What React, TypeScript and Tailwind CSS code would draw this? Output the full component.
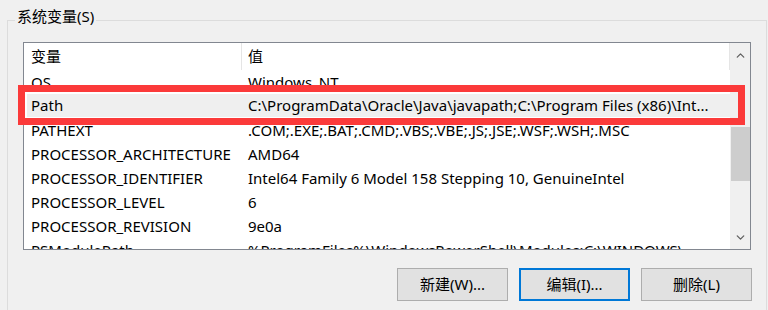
import { ChevronUp, ChevronDown } from "lucide-react";

const rows = [
  { name: "OS", value: "Windows_NT" },
  {
    name: "Path",
    value:
      "C:\\ProgramData\\Oracle\\Java\\javapath;C:\\Program Files (x86)\\Int...",
    selected: true,
  },
  { name: "PATHEXT", value: ".COM;.EXE;.BAT;.CMD;.VBS;.VBE;.JS;.JSE;.WSF;.WSH;.MSC" },
  { name: "PROCESSOR_ARCHITECTURE", value: "AMD64" },
  {
    name: "PROCESSOR_IDENTIFIER",
    value: "Intel64 Family 6 Model 158 Stepping 10, GenuineIntel",
  },
  { name: "PROCESSOR_LEVEL", value: "6" },
  { name: "PROCESSOR_REVISION", value: "9e0a" },
  {
    name: "PSModulePath",
    value: "%ProgramFiles%\\WindowsPowerShell\\Modules;C:\\WINDOWS\\...",
  },
];

function Row({ name, value, selected }: { name: string; value: string; selected?: boolean }) {
  return (
    <div className="h-[24px] shrink-0 flex">
      <div
        className={`flex w-full items-center whitespace-nowrap ${
          selected ? "ml-[3px] h-[23px] bg-[#efefef]" : ""
        }`}
      >
        <div className={`shrink-0 ${selected ? "w-[215px] pl-[4px]" : "w-[218px] pl-[7px]"}`}>
          {name}
        </div>
        <div className="pl-[6px]">{value}</div>
      </div>
    </div>
  );
}

function WinButton({ label, focused }: { label: string; focused?: boolean }) {
  return (
    <button
      className={`w-[111px] h-[33px] bg-[#e1e1e1] flex items-center justify-center text-black ${
        focused ? "border-2 border-[#0078d7]" : "border border-[#adadad]"
      }`}
    >
      {label}
    </button>
  );
}

export default function App() {
  return (
    <div
      className="w-[768px] h-[310px] bg-[#f0f0f0] overflow-hidden relative text-[15px] text-black leading-none"
      style={{ fontFamily: '"Noto Sans", "Noto Sans CJK SC", sans-serif' }}
    >
      <div className="ml-[7px] mt-[20px] w-[760px] h-[320px] border border-[#dcdcdc] relative pl-[15px] pt-[21px]">
        <span className="absolute left-[7px] top-[-12px] px-[2px] bg-[#f0f0f0]">系统变量(S)</span>

        {/* list view */}
        <div className="w-[728px] h-[208px] border border-[#828790] bg-white flex overflow-hidden">
          <div className="w-[706px] flex flex-col overflow-hidden">
            <div className="h-[27px] shrink-0 flex items-center">
              <div className="w-[218px] h-full pl-[7px] flex items-center border-r border-[#e5e5e5]">变量</div>
              <div className="flex-1 h-full pl-[6px] flex items-center border-r border-[#e5e5e5]">值</div>
            </div>
            {rows.map((r) => (
              <Row key={r.name} name={r.name} value={r.value} selected={r.selected} />
            ))}
          </div>
          {/* scrollbar */}
          <div className="w-[20px] bg-[#f0f0f0] flex flex-col items-center">
            <div className="h-[22px] flex items-center justify-center text-[#606060] mt-[1px]">
              <ChevronUp size={13} strokeWidth={2.4} />
            </div>
            <div className="w-[19px] h-[54px] bg-[#cdcdcd] mt-[61px]" />
            <div className="flex-1" />
            <div className="h-[22px] flex items-center justify-center text-[#606060] mb-[1px]">
              <ChevronDown size={13} strokeWidth={2.4} />
            </div>
          </div>
        </div>

        {/* buttons */}
        <div className="w-[729px] flex justify-end gap-[11px] mt-[18px]">
          <WinButton label="新建(W)..." />
          <WinButton label="编辑(I)..." focused />
          <WinButton label="删除(L)" />
        </div>
      </div>

      {/* red highlight box */}
      <div className="absolute left-[18px] top-[85px] w-[727px] h-[40px] border-[7px] border-[#fb3a3a]" />
    </div>
  );
}
